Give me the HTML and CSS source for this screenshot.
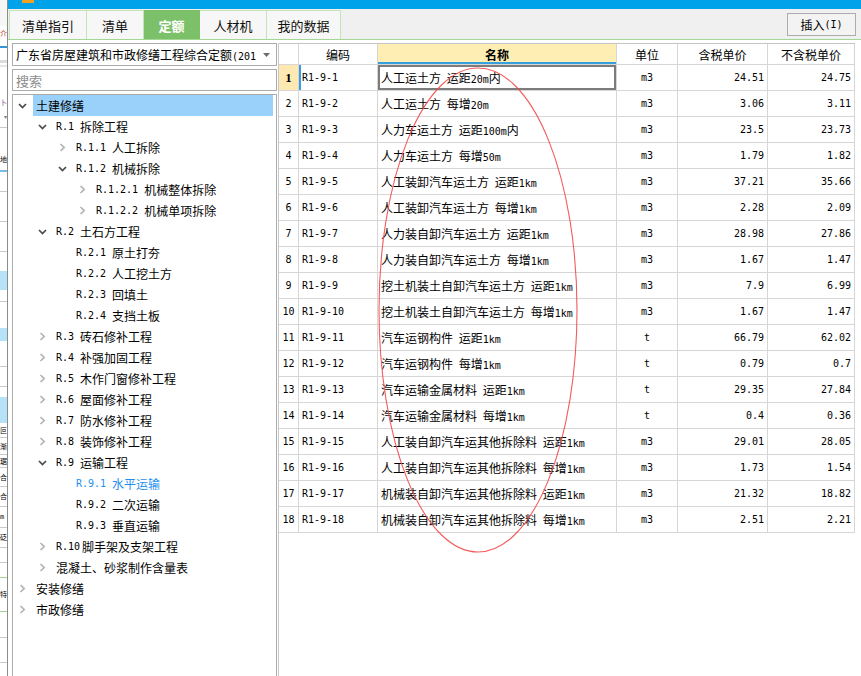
FILE: index.html
```html
<!DOCTYPE html>
<html lang="zh-CN">
<head>
<meta charset="utf-8">
<title>定额</title>
<link rel="stylesheet" href="styles.css">
</head>
<body>
<div class="screen">
  <div class="bgwin">
    <div class="bw h26 shade"></div>
    <div class="bw h14 txt red">介</div>
    <div class="bw h6"></div>
    <div class="bw h2 blue"></div>
    <div class="bw h9"></div>
    <div class="bw h12 gray"></div>
    <div class="bw h24"></div>
    <div class="bw h18 txt purple">卜</div>
    <div class="bw h10 txt tiny">▾</div>
    <div class="bw h7 line"></div>
    <div class="bw h20"></div>
    <div class="bw h22 txt">地</div>
    <div class="bw h2 blue2"></div>
    <div class="bw h20 line"></div>
    <div class="bw h30 line"></div>
    <div class="bw h30 line"></div>
    <div class="bw h19"></div>
    <div class="bw h19 lb"></div>
    <div class="bw h12 line"></div>
    <div class="bw h26"></div>
    <div class="bw h13 lb"></div>
    <div class="bw h26 line"></div>
    <div class="bw h20 line"></div>
    <div class="bw h10"></div>
    <div class="bw h26 lb"></div>
    <div class="bw h15 txt line">叵</div>
    <div class="bw h17 txt line">渐</div>
    <div class="bw h13 txt line">琚</div>
    <div class="bw h19 txt line">合</div>
    <div class="bw h20 txt line">合</div>
    <div class="bw h21 txt line mono">m</div>
    <div class="bw h20 txt line">砭</div>
    <div class="bw h15 line"></div>
    <div class="bw h15 gline"></div>
    <div class="bw h34 txt gline">特</div>
    <div class="bw h26 line"></div>
    <div class="bw h25 line"></div>
  </div>

  <div class="app">
    <div class="titlebar"><span class="appicon"></span></div>
    <div class="tabbar">
      <div class="tab t1">清单指引</div>
      <div class="tab t2">清单</div>
      <div class="tab t3 active">定额</div>
      <div class="tab t4">人材机</div>
      <div class="tab t5">我的数据</div>
      <div class="insert">插入<span class="m">(I)</span></div>
    </div>

    <div class="main">
      <div class="left">
        <div class="combo">
          <span class="combo-text">广东省房屋建筑和市政修缮工程综合定额<span class="m">(201</span></span>
          <svg class="combo-arrow" width="7" height="4" viewBox="0 0 7 4"><path d="M0 0H7L3.5 4Z" fill="#6d6d6d"/></svg>
        </div>
        <div class="search">搜索</div>
        <div class="tree">
          <div class="node l0"><svg class="chev" width="9" height="6" viewBox="0 0 9 6"><path d="M1 1L4.5 4.6L8 1" class="open"/></svg><span class="label sel">土建修缮</span></div>
          <div class="node l1"><svg class="chev" width="9" height="6" viewBox="0 0 9 6"><path d="M1 1L4.5 4.6L8 1" class="open"/></svg><span class="label"><span class="code">R.1</span>拆除工程</span></div>
          <div class="node l2"><svg class="chev" width="9" height="9" viewBox="0 0 9 9"><path d="M2.5 1L6.2 4.5L2.5 8" class="shut"/></svg><span class="label"><span class="code">R.1.1</span>人工拆除</span></div>
          <div class="node l2"><svg class="chev" width="9" height="6" viewBox="0 0 9 6"><path d="M1 1L4.5 4.6L8 1" class="open"/></svg><span class="label"><span class="code">R.1.2</span>机械拆除</span></div>
          <div class="node l3"><svg class="chev" width="9" height="9" viewBox="0 0 9 9"><path d="M2.5 1L6.2 4.5L2.5 8" class="shut"/></svg><span class="label"><span class="code">R.1.2.1</span>机械整体拆除</span></div>
          <div class="node l3"><svg class="chev" width="9" height="9" viewBox="0 0 9 9"><path d="M2.5 1L6.2 4.5L2.5 8" class="shut"/></svg><span class="label"><span class="code">R.1.2.2</span>机械单项拆除</span></div>
          <div class="node l1"><svg class="chev" width="9" height="6" viewBox="0 0 9 6"><path d="M1 1L4.5 4.6L8 1" class="open"/></svg><span class="label"><span class="code">R.2</span>土石方工程</span></div>
          <div class="node l2"><span class="chev blank"></span><span class="label"><span class="code">R.2.1</span>原土打夯</span></div>
          <div class="node l2"><span class="chev blank"></span><span class="label"><span class="code">R.2.2</span>人工挖土方</span></div>
          <div class="node l2"><span class="chev blank"></span><span class="label"><span class="code">R.2.3</span>回填土</span></div>
          <div class="node l2"><span class="chev blank"></span><span class="label"><span class="code">R.2.4</span>支挡土板</span></div>
          <div class="node l1"><svg class="chev" width="9" height="9" viewBox="0 0 9 9"><path d="M2.5 1L6.2 4.5L2.5 8" class="shut"/></svg><span class="label"><span class="code">R.3</span>砖石修补工程</span></div>
          <div class="node l1"><svg class="chev" width="9" height="9" viewBox="0 0 9 9"><path d="M2.5 1L6.2 4.5L2.5 8" class="shut"/></svg><span class="label"><span class="code">R.4</span>补强加固工程</span></div>
          <div class="node l1"><svg class="chev" width="9" height="9" viewBox="0 0 9 9"><path d="M2.5 1L6.2 4.5L2.5 8" class="shut"/></svg><span class="label"><span class="code">R.5</span>木作门窗修补工程</span></div>
          <div class="node l1"><svg class="chev" width="9" height="9" viewBox="0 0 9 9"><path d="M2.5 1L6.2 4.5L2.5 8" class="shut"/></svg><span class="label"><span class="code">R.6</span>屋面修补工程</span></div>
          <div class="node l1"><svg class="chev" width="9" height="9" viewBox="0 0 9 9"><path d="M2.5 1L6.2 4.5L2.5 8" class="shut"/></svg><span class="label"><span class="code">R.7</span>防水修补工程</span></div>
          <div class="node l1"><svg class="chev" width="9" height="9" viewBox="0 0 9 9"><path d="M2.5 1L6.2 4.5L2.5 8" class="shut"/></svg><span class="label"><span class="code">R.8</span>装饰修补工程</span></div>
          <div class="node l1"><svg class="chev" width="9" height="6" viewBox="0 0 9 6"><path d="M1 1L4.5 4.6L8 1" class="open"/></svg><span class="label"><span class="code">R.9</span>运输工程</span></div>
          <div class="node l2 current"><span class="chev blank"></span><span class="label"><span class="code">R.9.1</span>水平运输</span></div>
          <div class="node l2"><span class="chev blank"></span><span class="label"><span class="code">R.9.2</span>二次运输</span></div>
          <div class="node l2"><span class="chev blank"></span><span class="label"><span class="code">R.9.3</span>垂直运输</span></div>
          <div class="node l1"><svg class="chev" width="9" height="9" viewBox="0 0 9 9"><path d="M2.5 1L6.2 4.5L2.5 8" class="shut"/></svg><span class="label"><span class="code tight">R.10</span>脚手架及支架工程</span></div>
          <div class="node l1"><svg class="chev" width="9" height="9" viewBox="0 0 9 9"><path d="M2.5 1L6.2 4.5L2.5 8" class="shut"/></svg><span class="label">混凝土、砂浆制作含量表</span></div>
          <div class="node l0"><svg class="chev" width="9" height="9" viewBox="0 0 9 9"><path d="M2.5 1L6.2 4.5L2.5 8" class="shut"/></svg><span class="label">安装修缮</span></div>
          <div class="node l0"><svg class="chev" width="9" height="9" viewBox="0 0 9 9"><path d="M2.5 1L6.2 4.5L2.5 8" class="shut"/></svg><span class="label">市政修缮</span></div>
        </div>
      </div>

      <div class="right">
        <table class="grid">
          <thead>
            <tr>
              <th class="c-no"></th>
              <th class="c-code">编码</th>
              <th class="c-name hl">名称</th>
              <th class="c-unit">单位</th>
              <th class="c-tax">含税单价</th>
              <th class="c-notax">不含税单价</th>
            </tr>
          </thead>
          <tbody>
            <tr class="cur"><td class="no">1</td><td class="cd">R1-9-1</td><td class="nm focus">人工运土方 运距<span class="m">20m</span>内</td><td class="un">m3</td><td class="pr">24.51</td><td class="pr">24.75</td></tr>
            <tr><td class="no">2</td><td class="cd">R1-9-2</td><td class="nm">人工运土方 每增<span class="m">20m</span></td><td class="un">m3</td><td class="pr">3.06</td><td class="pr">3.11</td></tr>
            <tr><td class="no">3</td><td class="cd">R1-9-3</td><td class="nm">人力车运土方 运距<span class="m">100m</span>内</td><td class="un">m3</td><td class="pr">23.5</td><td class="pr">23.73</td></tr>
            <tr><td class="no">4</td><td class="cd">R1-9-4</td><td class="nm">人力车运土方 每增<span class="m">50m</span></td><td class="un">m3</td><td class="pr">1.79</td><td class="pr">1.82</td></tr>
            <tr><td class="no">5</td><td class="cd">R1-9-5</td><td class="nm">人工装卸汽车运土方 运距<span class="m">1km</span></td><td class="un">m3</td><td class="pr">37.21</td><td class="pr">35.66</td></tr>
            <tr><td class="no">6</td><td class="cd">R1-9-6</td><td class="nm">人工装卸汽车运土方 每增<span class="m">1km</span></td><td class="un">m3</td><td class="pr">2.28</td><td class="pr">2.09</td></tr>
            <tr><td class="no">7</td><td class="cd">R1-9-7</td><td class="nm">人力装自卸汽车运土方 运距<span class="m">1km</span></td><td class="un">m3</td><td class="pr">28.98</td><td class="pr">27.86</td></tr>
            <tr><td class="no">8</td><td class="cd">R1-9-8</td><td class="nm">人力装自卸汽车运土方 每增<span class="m">1km</span></td><td class="un">m3</td><td class="pr">1.67</td><td class="pr">1.47</td></tr>
            <tr><td class="no">9</td><td class="cd">R1-9-9</td><td class="nm">挖土机装土自卸汽车运土方 运距<span class="m">1km</span></td><td class="un">m3</td><td class="pr">7.9</td><td class="pr">6.99</td></tr>
            <tr><td class="no">10</td><td class="cd">R1-9-10</td><td class="nm">挖土机装土自卸汽车运土方 每增<span class="m">1km</span></td><td class="un">m3</td><td class="pr">1.67</td><td class="pr">1.47</td></tr>
            <tr><td class="no">11</td><td class="cd">R1-9-11</td><td class="nm">汽车运钢构件 运距<span class="m">1km</span></td><td class="un">t</td><td class="pr">66.79</td><td class="pr">62.02</td></tr>
            <tr><td class="no">12</td><td class="cd">R1-9-12</td><td class="nm">汽车运钢构件 每增<span class="m">1km</span></td><td class="un">t</td><td class="pr">0.79</td><td class="pr">0.7</td></tr>
            <tr><td class="no">13</td><td class="cd">R1-9-13</td><td class="nm">汽车运输金属材料 运距<span class="m">1km</span></td><td class="un">t</td><td class="pr">29.35</td><td class="pr">27.84</td></tr>
            <tr><td class="no">14</td><td class="cd">R1-9-14</td><td class="nm">汽车运输金属材料 每增<span class="m">1km</span></td><td class="un">t</td><td class="pr">0.4</td><td class="pr">0.36</td></tr>
            <tr><td class="no">15</td><td class="cd">R1-9-15</td><td class="nm">人工装自卸汽车运其他拆除料 运距<span class="m">1km</span></td><td class="un">m3</td><td class="pr">29.01</td><td class="pr">28.05</td></tr>
            <tr><td class="no">16</td><td class="cd">R1-9-16</td><td class="nm">人工装自卸汽车运其他拆除料 每增<span class="m">1km</span></td><td class="un">m3</td><td class="pr">1.73</td><td class="pr">1.54</td></tr>
            <tr><td class="no">17</td><td class="cd">R1-9-17</td><td class="nm">机械装自卸汽车运其他拆除料 运距<span class="m">1km</span></td><td class="un">m3</td><td class="pr">21.32</td><td class="pr">18.82</td></tr>
            <tr><td class="no">18</td><td class="cd">R1-9-18</td><td class="nm">机械装自卸汽车运其他拆除料 每增<span class="m">1km</span></td><td class="un">m3</td><td class="pr">2.51</td><td class="pr">2.21</td></tr>
          </tbody>
        </table>
      </div>
    </div>
  </div>

  <svg class="annot" width="861" height="676" viewBox="0 0 861 676">
    <ellipse cx="478" cy="310" rx="99" ry="242" fill="none" stroke="#f24a4a" stroke-width="1.1" opacity="0.9"/>
  </svg>
</div>
</body>
</html>
```

FILE: styles.css
```css
* { box-sizing: border-box; margin: 0; padding: 0; }

body {
  margin: 0;
  width: 861px;
  height: 676px;
  overflow: hidden;
  background: #ffffff;
  font-family: "Noto Sans CJK SC", "Noto Sans", sans-serif;
  font-size: 12px;
  color: #000;
}

.m, .code, .cd, .pr, .un, .no, .mono {
  font-family: "DejaVu Sans Mono", "Liberation Mono", "Noto Sans CJK SC", monospace;
}

.screen {
  position: relative;
  display: flex;
  height: 676px;
}

/* ---------- background window strip ---------- */
.bgwin {
  width: 8px;
  flex: none;
  border-right: 1px solid #8c8c8c;
  overflow: hidden;
  display: flex;
  flex-direction: column;
  background: #fff;
}
.bw { flex: none; overflow: hidden; white-space: nowrap; }
.h2 { height: 2px; } .h6 { height: 6px; } .h7 { height: 7px; } .h9 { height: 9px; }
.h10 { height: 10px; } .h12 { height: 12px; } .h13 { height: 13px; } .h14 { height: 14px; }
.h15 { height: 15px; } .h17 { height: 17px; } .h18 { height: 18px; } .h19 { height: 19px; }
.h20 { height: 20px; } .h21 { height: 21px; } .h22 { height: 22px; } .h24 { height: 24px; }
.h25 { height: 25px; } .h26 { height: 26px; } .h30 { height: 30px; } .h34 { height: 34px; }
.bw.shade { background: #f6f6f6; }
.bw.txt { font-size: 7px; line-height: 7px; display: flex; align-items: center; }
.bw.red { color: #b8452c; }
.bw.purple { color: #7d4b8e; }
.bw.tiny { font-size: 6px; color: #777; justify-content: flex-end; }
.bw.blue { background: #3796d8; }
.bw.blue2 { background: #74bde8; }
.bw.gray { background: linear-gradient(#fff 0 3px, #dcdcdc 3px 6px, #fff 6px 8px, #e6e6e6 8px 10px, #fff 10px); }
.bw.line { border-bottom: 1px solid #c9c9c9; }
.bw.gline { border-bottom: 1px solid #9fd48f; }
.bw.lb { background: #b6e2f7; }

/* ---------- app window ---------- */
.app {
  flex: 1;
  min-width: 0;
  display: flex;
  flex-direction: column;
  background: #fff;
}

.titlebar {
  height: 9px;
  flex: none;
  background: #00a3e9;
  display: flex;
  align-items: flex-start;
}
.appicon {
  width: 12px;
  height: 3px;
  margin-left: 14px;
  background: #f4a11e;
}

.tabbar {
  height: 31px;
  flex: none;
  display: flex;
  align-items: flex-start;
  padding: 1px 0 0 1px;
  background: #f0f0f0;
  border-bottom: 1px solid #a3d794;
}
.tab {
  height: 29px;
  display: flex;
  align-items: center;
  justify-content: center;
  font-size: 13px;
  color: #111;
  background: #f7f7f7;
  border-top: 1px solid #c4e5b8;
  border-right: 1px solid #c4e5b8;
}
.tab.t1 { width: 78px; border-left: 1px solid #c4e5b8; }
.tab.t2 { width: 57px; }
.tab.t3 { width: 56px; }
.tab.t4 { width: 67px; }
.tab.t5 { width: 74px; }
.tab.active {
  background: #7cc16a;
  border-color: #7cc16a;
  color: #fff;
  font-weight: bold;
}
.insert {
  margin: 3px 5px 0 auto;
  width: 69px;
  height: 23px;
  display: flex;
  align-items: center;
  justify-content: center;
  font-size: 12px;
  background: #f3f3f3;
  border: 1px solid #acacac;
}
.insert .m { font-size: 10px; }

.main {
  flex: 1;
  min-height: 0;
  display: flex;
  padding-top: 3px;
}

/* ---------- left panel ---------- */
.left {
  width: 265px;
  flex: none;
  margin-left: 4px;
  display: flex;
  flex-direction: column;
  gap: 3px;
}
.combo {
  height: 23px;
  flex: none;
  display: flex;
  align-items: center;
  padding: 0 6px 0 3px;
  border: 1px solid #acacac;
  background: #fff;
}
.combo-text {
  flex: 1;
  overflow: hidden;
  white-space: nowrap;
  font-size: 12px;
}
.combo-text .m { font-size: 10px; }
.combo-arrow { flex: none; margin-left: 3px; }

.search {
  height: 22px;
  flex: none;
  display: flex;
  align-items: center;
  padding-left: 3px;
  border: 1px solid #acacac;
  color: #8c8c8c;
  font-size: 13px;
}

.tree {
  flex: 1;
  border: 1px solid #acacac;
  border-bottom: none;
  background: #fff;
}
.node {
  height: 21px;
  display: flex;
  align-items: center;
  padding-left: 5px;
}
.node.l1 { padding-left: 25px; }
.node.l2 { padding-left: 45px; }
.node.l3 { padding-left: 65px; }
.chev { width: 9px; flex: none; display: block; }
.chev.blank { height: 1px; }
.chev .open { fill: none; stroke: #4a4a4a; stroke-width: 1.7; }
.chev .shut { fill: none; stroke: #b3b3b3; stroke-width: 1.7; }
.label {
  flex: 1;
  height: 21px;
  display: flex;
  align-items: center;
  margin: 0 3px 0 6px;
  padding-left: 3px;
  white-space: nowrap;
  font-size: 12px;
}
.label.sel { background: #99d1fb; }
.code { font-size: 10px; margin-right: 6px; }
.code.tight { margin-right: 2px; }
.node.current .label { color: #1e8ff0; }

/* ---------- right grid ---------- */
.right {
  flex: 1;
  min-width: 0;
  margin-left: 1px;
  border-left: 1px solid #c8c8c8;
}
.grid {
  border-collapse: separate;
  border-spacing: 0;
  table-layout: fixed;
  width: 576px;
  border-top: 1px solid #c4c4c4;
}
.grid th, .grid td {
  border-right: 1px solid #d6d6d6;
  border-bottom: 1px solid #d6d6d6;
  padding: 0 3px;
  white-space: nowrap;
  overflow: hidden;
}
.grid th {
  height: 21px;
  font-weight: normal;
  font-size: 12px;
  text-align: center;
  background: #fff;
}
.grid th.hl {
  background: #feeeb4;
  font-weight: bold;
  box-shadow: inset 0 -2px 0 #34a0dd;
}
.c-no { width: 20px; }
.c-code { width: 79px; }
.c-name { width: 239px; }
.c-unit { width: 61px; }
.c-tax { width: 90px; }
.c-notax { width: 87px; }

.grid td { height: 26px; font-size: 12px; }
.grid td.no { text-align: center; font-size: 10px; padding: 0; }
.grid td.cd { font-size: 10px; }
.grid td.nm { word-spacing: 3px; }
.grid td.nm .m { font-size: 10px; word-spacing: 0; }
.grid td.un { text-align: center; font-size: 10px; }
.grid td.pr { text-align: right; font-size: 10px; padding-right: 3px; }
.grid tr.cur td.no {
  background: #fde9b1;
  font-weight: bold;
  font-family: "Liberation Serif", serif;
  font-size: 13px;
}
.grid tr.cur td.cd { box-shadow: inset 2px 0 0 #3a9ddc; }
.grid td.focus { box-shadow: inset 0 0 0 2px #7c7c7c; }

.annot {
  position: absolute;
  left: 0;
  top: 0;
  pointer-events: none;
}
```
